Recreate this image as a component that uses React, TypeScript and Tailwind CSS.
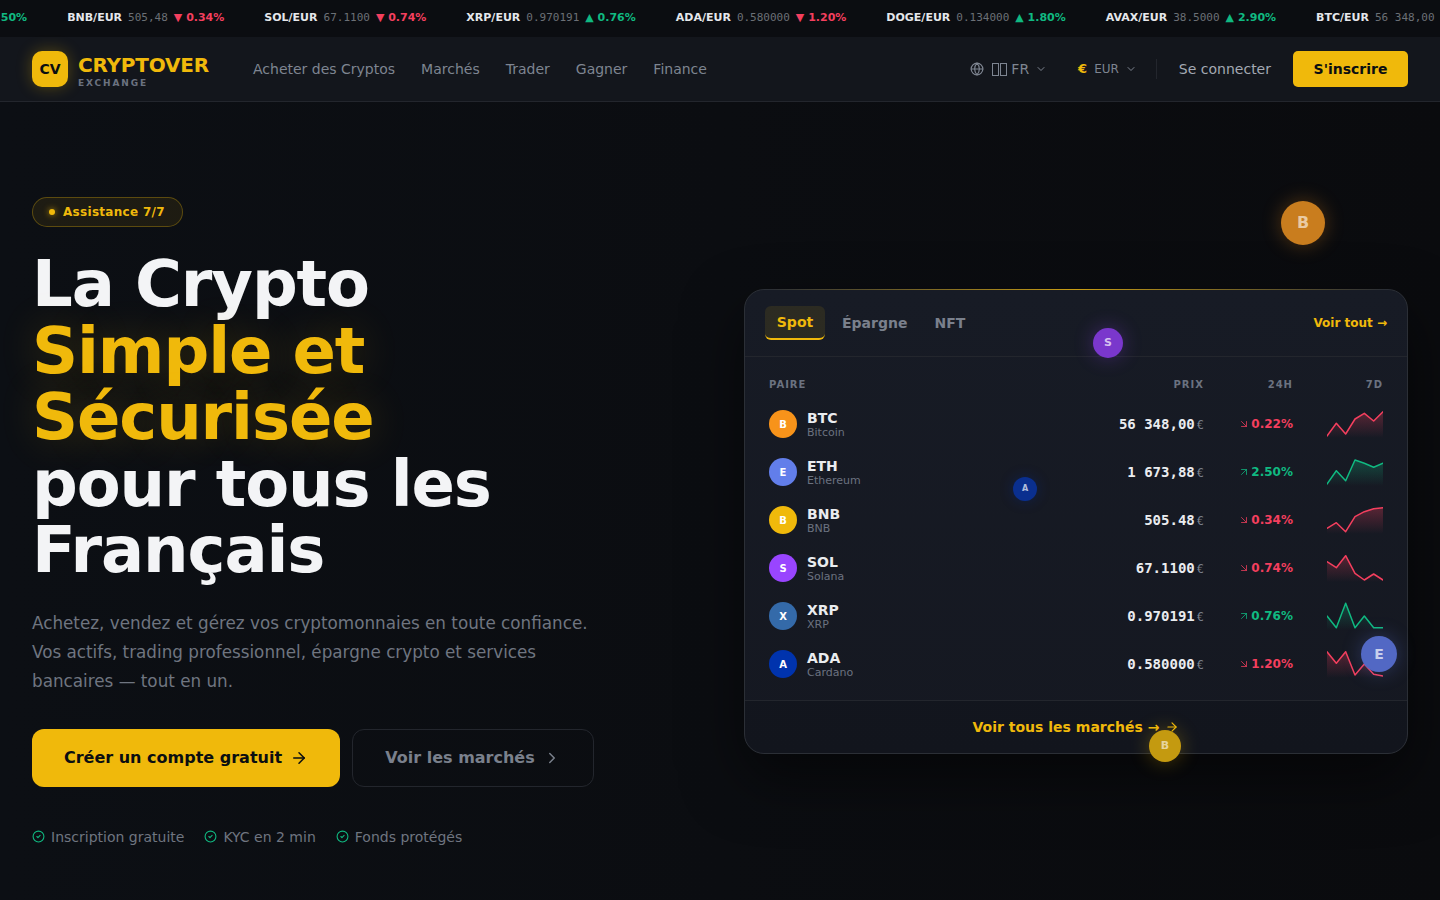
import { ArrowDownRight, ArrowRight, ArrowUpRight, ChevronDown, ChevronRight, CircleCheck, Globe } from 'lucide-react';

const TICKER = [
  { pair: 'ETH/EUR', price: '1 673,88', up: true, pct: '2.50%' },
  { pair: 'BNB/EUR', price: '505,48', up: false, pct: '0.34%' },
  { pair: 'SOL/EUR', price: '67.1100', up: false, pct: '0.74%' },
  { pair: 'XRP/EUR', price: '0.970191', up: true, pct: '0.76%' },
  { pair: 'ADA/EUR', price: '0.580000', up: false, pct: '1.20%' },
  { pair: 'DOGE/EUR', price: '0.134000', up: true, pct: '1.80%' },
  { pair: 'AVAX/EUR', price: '38.5000', up: true, pct: '2.90%' },
  { pair: 'BTC/EUR', price: '56 348,00', up: false, pct: '0.22%' },
];

const NAV = ['Acheter des Cryptos', 'Marchés', 'Trader', 'Gagner', 'Finance'];

const ROWS = [
  { id: 'BTC', name: 'Bitcoin', letter: 'B', bg: 'bg-[#f7931a]', price: '56 348,00', up: false, pct: '0.22%', line: [26, 13.3, 24, 9, 3.3, 11, 1.7] },
  { id: 'ETH', name: 'Ethereum', letter: 'E', bg: 'bg-[#627eea]', price: '1 673,88', up: true, pct: '2.50%', line: [26, 12.7, 22.7, 2, 5.3, 9.3, 5.3] },
  { id: 'BNB', name: 'BNB', letter: 'B', bg: 'bg-[#f0b90b]', price: '505.48', up: false, pct: '0.34%', line: [22.3, 16.7, 25.7, 10.7, 5.7, 2.7, 1.7] },
  { id: 'SOL', name: 'Solana', letter: 'S', bg: 'bg-[#9945ff]', price: '67.1100', up: false, pct: '0.74%', line: [7.7, 13.7, 1.7, 19.3, 26, 20, 26] },
  { id: 'XRP', name: 'XRP', letter: 'X', bg: 'bg-[#346aa9]', price: '0.970191', up: true, pct: '0.76%', line: [14, 25.7, 1.3, 25.7, 14, 25.7, 25.7] },
  { id: 'ADA', name: 'Cardano', letter: 'A', bg: 'bg-[#0033ad]', price: '0.580000', up: false, pct: '1.20%', line: [1.7, 13.3, 1.7, 25, 14, 24.3, 26] },
];

function Spark({ id, line, up }: { id: string; line: number[]; up: boolean }) {
  const color = up ? '#10b981' : '#f43f5e';
  const pts = line.map((y, i) => `${(i * 56) / 6},${y}`).join(' ');
  return (
    <svg width="56" height="28" viewBox="0 0 56 28" fill="none">
      <defs>
        <linearGradient id={`g-${id}`} x1="0" y1="0" x2="0" y2="1">
          <stop offset="0%" stopColor={color} stopOpacity="0.3" />
          <stop offset="100%" stopColor={color} stopOpacity="0" />
        </linearGradient>
      </defs>
      <polygon points={`0,28 ${pts} 56,28`} fill={`url(#g-${id})`} />
      <polyline points={pts} stroke={color} strokeWidth="1.5" strokeLinejoin="round" strokeLinecap="round" />
    </svg>
  );
}

export default function App() {
  return (
    <div className="relative h-screen overflow-hidden bg-gradient-to-r from-[#0c0f14] to-[#0a0b0e] text-white font-['DejaVu_Sans',sans-serif]">
      {/* Ticker */}
      <div className="h-[37px] pb-0.5 bg-[#0b0d11] overflow-hidden flex items-center">
        <div className="flex items-center gap-10 -ml-[141.5px] whitespace-nowrap flex-shrink-0">
          {TICKER.map((t) => (
            <div key={t.pair} className="flex items-center gap-1.5 text-[11px] leading-none flex-shrink-0">
              <span className="font-bold text-[#e5e7eb]">{t.pair}</span>
              <span className="font-['DejaVu_Sans_Mono',monospace] text-[11px] text-[#6b7076]">{t.price}</span>
              <span className={`font-bold ${t.up ? 'text-[#10b981]' : 'text-[#f43f5e]'}`}>
                {t.up ? '▲' : '▼'} {t.pct}
              </span>
            </div>
          ))}
        </div>
      </div>

      {/* Nav */}
      <header className="h-[65px] bg-[#13161c] border-b border-[#23262d] flex items-center px-8">
        <div className="flex items-center gap-2.5">
          <div className="w-9 h-9 rounded-[10px] bg-[#f0b90b] flex items-center justify-center text-sm font-bold text-[#0b0e11] shadow-[0_0_16px_rgba(240,185,11,0.3)]">
            CV
          </div>
          <div className="flex flex-col mt-1.5">
            <span className="text-xl leading-5 font-bold tracking-[-0.2px] text-[#f0b90b]">CRYPTOVER</span>
            <span className="text-[9px] leading-3 mt-0.5 font-bold tracking-[0.21em] text-[#6b7280]">EXCHANGE</span>
          </div>
        </div>
        <nav className="flex items-center gap-[26px] ml-11 text-sm text-[#7e8591]">
          {NAV.map((n) => (
            <span key={n}>{n}</span>
          ))}
        </nav>
        <div className="flex-1" />
        <div className="flex items-center text-[#7e8591]">
          <Globe size={14} />
          {/* the flag has no glyph in the reference: two empty boxes */}
          <span className="ml-2 flex gap-px">
            <span className="w-[7px] h-[13px] border border-[#7e8591]" />
            <span className="w-[7px] h-[13px] border border-[#7e8591]" />
          </span>
          <span className="ml-1 text-sm">FR</span>
          <ChevronDown size={12} className="ml-1.5" />
          <span className="ml-[31px] text-[13px] font-bold text-[#f0b90b]">€</span>
          <span className="ml-[7px] text-xs">EUR</span>
          <ChevronDown size={12} className="ml-1.5" />
          <div className="w-px h-5 bg-[#23262d] ml-[19px]" />
          <span className="ml-[22px] text-sm text-[#a3a9b3]">Se connecter</span>
          <button className="ml-[22px] w-[115px] h-9 rounded-[5px] bg-[#f0b90b] text-sm font-bold text-[#0b0e11]">S'inscrire</button>
        </div>
      </header>

      {/* Hero */}
      <main className="relative grid grid-cols-2 gap-12 px-8 pt-[95px] items-start">
        <section>
          <div className="inline-flex items-center gap-2 h-[30px] pl-4 pr-[17px] rounded-full bg-[#f0b90b]/[0.08] border border-[#f0b90b]/30 text-xs font-bold tracking-[0.3px] text-[#f0b90b]">
            <span className="w-1.5 h-1.5 rounded-full bg-[#f0b90b] shadow-[0_0_6px_rgba(240,185,11,0.8)]" />
            Assistance 7/7
          </div>
          <h1 className="mt-6 text-[64px] leading-[66.6px] font-bold tracking-[-1.1px] text-[#f3f4f6]">
            La Crypto
            <br />
            <span className="text-[#f0b90b] [text-shadow:0_0_40px_rgba(240,185,11,0.2)]">
              Simple et
              <br />
              Sécurisée
            </span>
            <br />
            pour tous les
            <br />
            Français
          </h1>
          <p className="mt-[25px] text-[16.8px] leading-[29px] text-[#6f7580] w-[570px]">
            Achetez, vendez et gérez vos cryptomonnaies en toute confiance. Vos actifs, trading professionnel, épargne crypto et services bancaires — tout en un.
          </p>
          <div className="mt-[33px] flex gap-3">
            <button className="w-[308px] h-[58px] rounded-xl bg-[#f0b90b] flex items-center justify-center gap-2 text-base font-bold text-[#0b0e11]">
              Créer un compte gratuit
              <ArrowRight size={18} />
            </button>
            <button className="w-[242px] h-[58px] rounded-xl border border-[#23262d] flex items-center justify-center gap-2 text-base font-bold text-[#7a808c]">
              Voir les marchés
              <ChevronRight size={18} />
            </button>
          </div>
          <div className="mt-10 flex gap-5 text-sm text-[#6f7580]">
            {['Inscription gratuite', 'KYC en 2 min', 'Fonds protégés'].map((c) => (
              <span key={c} className="flex items-center gap-1.5">
                <CircleCheck size={13} className="text-[#10b981]" />
                {c}
              </span>
            ))}
          </div>
        </section>

        {/* Market card */}
        <section className="relative mt-[92px] h-[465px] rounded-[20px] border border-[#2b2f36] bg-gradient-to-b from-[#171b25] to-[#151821] shadow-[0_24px_60px_rgba(0,0,0,0.5)]">
          <div className="absolute left-6 right-6 -top-px h-px bg-gradient-to-r from-transparent via-[#f0b90b]/80 to-transparent" />
          <div className="h-[67px] border-b border-[#23262d] flex items-center px-5">
            <span className="h-[34px] w-[60px] rounded-md border-b-2 border-[#f0b90b] bg-[#f0b90b]/10 flex items-center justify-center text-sm font-bold text-[#f0b90b]">Spot</span>
            <span className="ml-[17px] text-sm font-bold text-[#7a808c]">Épargne</span>
            <span className="ml-[27px] text-sm font-bold text-[#7a808c]">NFT</span>
            <span className="ml-auto text-xs font-bold text-[#f0b90b]">Voir tout →</span>
          </div>
          <div className="px-6 pt-5">
            <div className="grid grid-cols-[1fr_120px_89px_90px] items-center h-[14px] mb-[9px] text-[10px] font-bold tracking-[0.1em] text-[#6b7280]">
              <span>PAIRE</span>
              <span className="text-right">PRIX</span>
              <span className="text-right">24H</span>
              <span className="text-right">7D</span>
            </div>
            {ROWS.map((r) => (
              <div key={r.id} className="grid grid-cols-[1fr_120px_89px_90px] items-center h-12">
                <div className="flex items-center gap-2.5">
                  <div className={`w-7 h-7 rounded-full ${r.bg} flex items-center justify-center text-[10px] font-bold text-white`}>{r.letter}</div>
                  <div className="flex flex-col">
                    <span className="text-sm leading-4 font-bold text-[#eaecef]">{r.id}</span>
                    <span className="mt-px text-[11px] leading-3 text-[#6b7280]">{r.name}</span>
                  </div>
                </div>
                <div className="text-right whitespace-nowrap font-['DejaVu_Sans_Mono',monospace] text-sm font-bold text-[#eaecef]">
                  {r.price}
                  <span className="ml-0.5 text-xs font-normal text-[#7a808c]">€</span>
                </div>
                <div className={`flex items-center justify-end gap-px text-xs font-bold ${r.up ? 'text-[#10b981]' : 'text-[#f43f5e]'}`}>
                  {r.up ? <ArrowUpRight size={12} strokeWidth={1.5} /> : <ArrowDownRight size={12} strokeWidth={1.5} />}
                  {r.pct}
                </div>
                <div className="flex justify-end">
                  <Spark id={r.id} line={r.line} up={r.up} />
                </div>
              </div>
            ))}
          </div>
          <div className="absolute left-0 right-0 bottom-0 h-[53px] rounded-b-[20px] bg-black/10 border-t border-[#23262d] flex items-center justify-center gap-1.5 text-sm font-bold text-[#f0b90b]">
            Voir tous les marchés →
            <ArrowRight size={14} />
          </div>
        </section>

        {/* Floating coins */}
        <div className="absolute left-[1281px] top-[99px] w-11 h-11 rounded-full bg-[#c97d1e] flex items-center justify-center text-base font-bold text-white/60 shadow-[0_0_20px_rgba(247,147,26,0.3)]">B</div>
        <div className="absolute left-[1093px] top-[226px] w-[30px] h-[30px] rounded-full bg-[#7a37cc] flex items-center justify-center text-[11px] font-bold text-white/70 shadow-[0_0_20px_rgba(153,69,255,0.3)]">S</div>
        <div className="absolute left-[1013px] top-[375px] w-6 h-6 rounded-full bg-[#0a2f8f] flex items-center justify-center text-[8px] font-bold text-white/70 shadow-[0_0_14px_rgba(0,51,173,0.3)]">A</div>
        <div className="absolute left-[1361px] top-[534px] w-9 h-9 rounded-full bg-[#5268c4] flex items-center justify-center text-sm font-bold text-white/70 shadow-[0_0_20px_rgba(98,126,234,0.3)]">E</div>
        <div className="absolute left-[1149px] top-[628px] w-8 h-8 rounded-full bg-[#c49a10] flex items-center justify-center text-[11px] font-bold text-white/60 shadow-[0_0_20px_rgba(240,185,11,0.3)]">B</div>
      </main>
    </div>
  );
}
